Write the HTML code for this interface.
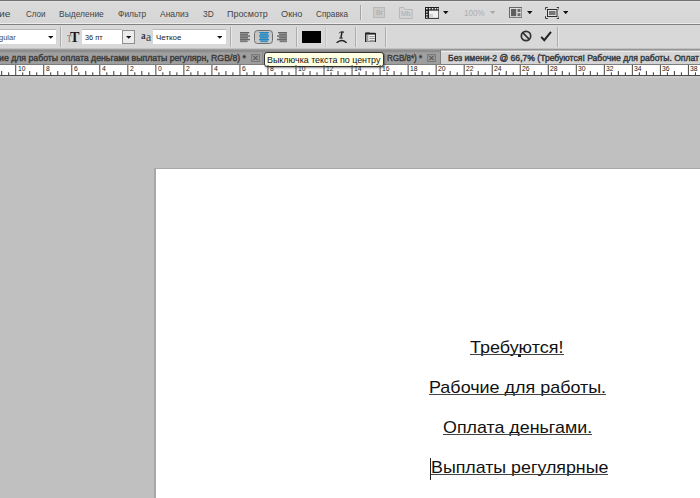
<!DOCTYPE html>
<html lang="ru"><head><meta charset="utf-8"><title>Photoshop</title>
<style>
html,body{margin:0;padding:0}
body{width:700px;height:498px;overflow:hidden;position:relative;background:#c0c0c0;font-family:"Liberation Sans",sans-serif}
.r{position:absolute;display:block}
.t{position:absolute;white-space:pre;transform-origin:0 50%;display:block}
</style></head><body>
<div class="r" style="left:0px;top:0px;width:700px;height:1px;background:#727272;"></div>
<div class="r" style="left:0px;top:1px;width:700px;height:22px;background:linear-gradient(#e2e2e2 0,#dadada 2px,#d6d6d6 100%);"></div>
<div class="r" style="left:0px;top:23px;width:700px;height:1px;background:#ececec;"></div>
<div class="r" style="left:0px;top:24px;width:700px;height:1px;background:#808080;"></div>
<div class="r" style="left:0px;top:25px;width:700px;height:23px;background:#d8d8d8;"></div>
<div class="r" style="left:0px;top:48px;width:700px;height:1px;background:#c2c2c2;"></div>
<div class="r" style="left:0px;top:49px;width:700px;height:16px;background:linear-gradient(#a6a6a6 0,#8c8c8c 1.5px,#8e8e8e 2.6px,#a0a0a0 4px,#9d9d9d 100%);"></div>
<div class="r" style="left:440px;top:49px;width:260px;height:16px;background:linear-gradient(#949494 0,#949494 1px,#b4b4b4 1px,#b4b4b4 2px,#ececec 2px,#ececec 3px,#d6d6d6 3px,#d4d4d4 100%);"></div>
<div class="r" style="left:0px;top:64px;width:700px;height:1px;background:#7c7c7c;"></div>
<div class="r" style="left:262px;top:50px;width:1px;height:15px;background:#8a8a8a;"></div>
<div class="r" style="left:439.5px;top:50px;width:1px;height:14px;background:#808080;"></div>
<div class="r" style="left:0px;top:65px;width:700px;height:11px;background:#ffffff;"></div>
<div class="r" style="left:0px;top:75.3px;width:700px;height:1px;background:#4a4a4a;"></div>
<div class="r" style="left:0px;top:76.3px;width:700px;height:2px;background:#cacaca;"></div>
<span class="t" style="left:25.50px;top:8px;font-size:9.5px;line-height:11px;color:#454545;font-family:'Liberation Sans',sans-serif;transform:scaleX(0.8441);">Слои</span>
<span class="t" style="left:59.00px;top:8px;font-size:9.5px;line-height:11px;color:#454545;font-family:'Liberation Sans',sans-serif;transform:scaleX(0.8900);">Выделение</span>
<span class="t" style="left:118.00px;top:8px;font-size:9.5px;line-height:11px;color:#454545;font-family:'Liberation Sans',sans-serif;transform:scaleX(0.8836);">Фильтр</span>
<span class="t" style="left:160.00px;top:8px;font-size:9.5px;line-height:11px;color:#454545;font-family:'Liberation Sans',sans-serif;transform:scaleX(0.8949);">Анализ</span>
<span class="t" style="left:203.00px;top:8px;font-size:9.5px;line-height:11px;color:#454545;font-family:'Liberation Sans',sans-serif;transform:scaleX(0.8811);">3D</span>
<span class="t" style="left:226.70px;top:8px;font-size:9.5px;line-height:11px;color:#454545;font-family:'Liberation Sans',sans-serif;transform:scaleX(0.9404);">Просмотр</span>
<span class="t" style="left:281.20px;top:8px;font-size:9.5px;line-height:11px;color:#454545;font-family:'Liberation Sans',sans-serif;transform:scaleX(0.9649);">Окно</span>
<span class="t" style="left:315.50px;top:8px;font-size:9.5px;line-height:11px;color:#454545;font-family:'Liberation Sans',sans-serif;transform:scaleX(0.8587);">Справка</span>
<span class="t" style="left:-1.50px;top:8px;font-size:9.5px;line-height:11px;color:#454545;font-family:'Liberation Sans',sans-serif;transform:scaleX(1.0859);">ие</span>
<div class="r" style="left:360px;top:5px;width:1px;height:15px;background:#a4a4a4;"></div>
<div class="r" style="left:361px;top:5px;width:1px;height:15px;background:#e6e6e6;"></div>
<div class="r" style="left:373px;top:7px;width:12px;height:11px;background:#cbcbcb;border:1px solid #b9b9b9;box-sizing:border-box;"></div>
<span class="t" style="left:375.80px;top:8px;font-size:7.2px;line-height:9px;color:#a9a9a9;font-family:'Liberation Sans',sans-serif;transform:scaleX(0.9444);">Br</span>
<svg class="r" style="left:399px;top:6.5px" width="14" height="12" viewBox="0 0 14 12"><path d="M0.5 0.5H4.6L6 2.5H13.2V11.5H0.5Z" fill="#d4d4d4" stroke="#b8b8b8" stroke-width="1"/></svg>
<span class="t" style="left:401.40px;top:9px;font-size:7.6px;line-height:9px;color:#a9a9a9;font-family:'Liberation Sans',sans-serif;transform:scaleX(0.9093);">Mb</span>
<svg class="r" style="left:425px;top:7px" width="14.3" height="11.8" viewBox="0 0 14.3 11.8"><rect x="0" y="0" width="14.3" height="11.8" fill="#1c1c1c"/><rect x="4" y="3.6" width="9.4" height="7.3" fill="#f2f2f2"/><rect x="4" y="7" width="4" height="3.9" fill="#d4d4d4"/><g fill="#e8e8e8"><rect x="1" y="1" width="1.6" height="1.4"/><rect x="3.9" y="1" width="1.6" height="1.4"/><rect x="6.8" y="1" width="1.6" height="1.4"/><rect x="9.7" y="1" width="1.6" height="1.4"/><rect x="12.2" y="1" width="1.3" height="1.4"/><rect x="1" y="4.2" width="1.6" height="1.4"/><rect x="1" y="6.9" width="1.6" height="1.4"/><rect x="1" y="9.5" width="1.6" height="1.3"/></g></svg>
<svg class="r" style="left:443.4px;top:11.1px" width="5.5" height="3.2" viewBox="0 0 5.5 3.2"><polygon points="0,0 5.5,0 2.75,3.2" fill="#111"/></svg>
<span class="t" style="left:463.60px;top:8px;font-size:8.6px;line-height:10px;color:#adadad;font-family:'Liberation Sans',sans-serif;transform:scaleX(0.9411);">100%</span>
<svg class="r" style="left:490.3px;top:11px" width="5.2" height="3" viewBox="0 0 5.2 3"><polygon points="0,0 5.2,0 2.6,3" fill="#a8a8a8"/></svg>
<svg class="r" style="left:509px;top:7px" width="13.4" height="11.2" viewBox="0 0 13.4 11.2"><rect x="0.5" y="0.5" width="12.4" height="10.2" fill="#dedede" stroke="#666"/><rect x="2" y="2" width="5.2" height="7.2" fill="#5e5e5e"/><rect x="8.5" y="2" width="3" height="3" fill="#6a6a6a"/><rect x="8.5" y="6.2" width="3" height="3" fill="#6a6a6a"/></svg>
<svg class="r" style="left:527.2px;top:11.1px" width="5.5" height="3.2" viewBox="0 0 5.5 3.2"><polygon points="0,0 5.5,0 2.75,3.2" fill="#111"/></svg>
<svg class="r" style="left:544.5px;top:6.8px" width="14.5" height="12" viewBox="0 0 14.5 12"><path d="M0.5 2.8V0.5H2.8M11.7 0.5H14V2.8M14 9.2V11.5H11.7M2.8 11.5H0.5V9.2" fill="none" stroke="#3a3a3a" stroke-width="1"/><rect x="2.5" y="2.5" width="9.5" height="7" fill="#e0e0e0" stroke="#2e2e2e"/><rect x="4" y="4" width="6.5" height="4" fill="#777"/></svg>
<svg class="r" style="left:562.8px;top:11.1px" width="5.5" height="3.2" viewBox="0 0 5.5 3.2"><polygon points="0,0 5.5,0 2.75,3.2" fill="#111"/></svg>
<div class="r" style="left:0px;top:29px;width:56px;height:15px;background:#ffffff;border-top:1px solid #b8b8b8;box-sizing:border-box;"></div>
<span class="t" style="left:-1.00px;top:33px;font-size:7.8px;line-height:9px;color:#4a4a4a;font-family:'Liberation Sans',sans-serif;transform:scaleX(0.9628);">gular</span>
<svg class="r" style="left:47.5px;top:36.2px" width="5.6" height="2.8" viewBox="0 0 5.6 2.8"><polygon points="0,0 5.6,0 2.8,2.8" fill="#111"/></svg>
<div class="r" style="left:60px;top:27px;width:1px;height:20px;background:#adadad;"></div>
<div class="r" style="left:61px;top:27px;width:1px;height:20px;background:#e6e6e6;"></div>
<span class="t" style="left:70.30px;top:30px;font-size:13.8px;line-height:15px;color:#1a1a1a;font-family:'Liberation Serif',serif;font-weight:bold;transform:scaleX(1.0212);">T</span>
<span class="t" style="left:66.60px;top:34px;font-size:9.5px;line-height:10px;color:#8a8a8a;font-family:'Liberation Serif',serif;font-weight:bold;transform:scaleX(0.7260);">T</span>
<div class="r" style="left:82px;top:29px;width:40px;height:15px;background:#ffffff;border-top:1px solid #b8b8b8;box-sizing:border-box;"></div>
<span class="t" style="left:85.20px;top:33px;font-size:7.8px;line-height:9px;color:#222;font-family:'Liberation Sans',sans-serif;transform:scaleX(0.9389);">36 пт</span>
<div class="r" style="left:122px;top:30px;width:12.5px;height:14px;background:#ececec;border:1px solid #8f8f8f;box-sizing:border-box;"></div>
<svg class="r" style="left:126px;top:36.2px" width="5.4" height="2.8" viewBox="0 0 5.4 2.8"><polygon points="0,0 5.4,0 2.7,2.8" fill="#111"/></svg>
<span class="t" style="left:141.30px;top:29px;font-size:11px;line-height:12px;color:#333;font-family:'Liberation Serif',serif;font-weight:bold;transform:scaleX(0.8364);">a</span>
<span class="t" style="left:146.30px;top:30px;font-size:12px;line-height:14px;color:#3c3c3c;font-family:'Liberation Serif',serif;transform:scaleX(0.9763);">a</span>
<div class="r" style="left:153px;top:29px;width:73px;height:15px;background:#ffffff;border-top:1px solid #b8b8b8;box-sizing:border-box;"></div>
<span class="t" style="left:156.00px;top:33px;font-size:7.8px;line-height:9px;color:#222;font-family:'Liberation Sans',sans-serif;transform:scaleX(1.0149);">Четкое</span>
<svg class="r" style="left:216.8px;top:36.2px" width="5.6" height="2.8" viewBox="0 0 5.6 2.8"><polygon points="0,0 5.6,0 2.8,2.8" fill="#111"/></svg>
<div class="r" style="left:230px;top:27px;width:1px;height:20px;background:#adadad;"></div>
<div class="r" style="left:231px;top:27px;width:1px;height:20px;background:#e6e6e6;"></div>
<svg class="r" style="left:239.7px;top:31.8px" width="10.2" height="11" viewBox="0 0 10.2 11"><rect x="0" y="0.00" width="9.2" height="1.72" fill="#666" opacity="0.5"/><rect x="0" y="0.00" width="9.2" height="1.05" fill="#666"/><rect x="0" y="1.72" width="8" height="1.72" fill="#666" opacity="0.5"/><rect x="0" y="1.72" width="8" height="1.05" fill="#666"/><rect x="0" y="3.44" width="10.2" height="1.72" fill="#666" opacity="0.5"/><rect x="0" y="3.44" width="10.2" height="1.05" fill="#666"/><rect x="0" y="5.16" width="8" height="1.72" fill="#666" opacity="0.5"/><rect x="0" y="5.16" width="8" height="1.05" fill="#666"/><rect x="0" y="6.88" width="10.2" height="1.72" fill="#666" opacity="0.5"/><rect x="0" y="6.88" width="10.2" height="1.05" fill="#666"/><rect x="0" y="8.60" width="7.5" height="1.72" fill="#666" opacity="0.5"/><rect x="0" y="8.60" width="7.5" height="1.05" fill="#666"/></svg>
<div class="r" style="left:254px;top:29.6px;width:19px;height:14.7px;background:linear-gradient(#c2c2c2,#cdcdcd);border:1.2px solid #6e6e6e;border-radius:3.5px;box-sizing:border-box;"></div>
<svg class="r" style="left:258.8px;top:31.8px" width="10.2" height="11" viewBox="0 0 10.2 11"><rect x="0.5" y="0.00" width="9.2" height="1.72" fill="#1f86c0" opacity="0.5"/><rect x="0.5" y="0.00" width="9.2" height="1.05" fill="#1f86c0"/><rect x="1.0999999999999996" y="1.72" width="8" height="1.72" fill="#1f86c0" opacity="0.5"/><rect x="1.0999999999999996" y="1.72" width="8" height="1.05" fill="#1f86c0"/><rect x="0.0" y="3.44" width="10.2" height="1.72" fill="#1f86c0" opacity="0.5"/><rect x="0.0" y="3.44" width="10.2" height="1.05" fill="#1f86c0"/><rect x="1.0999999999999996" y="5.16" width="8" height="1.72" fill="#1f86c0" opacity="0.5"/><rect x="1.0999999999999996" y="5.16" width="8" height="1.05" fill="#1f86c0"/><rect x="0.0" y="6.88" width="10.2" height="1.72" fill="#1f86c0" opacity="0.5"/><rect x="0.0" y="6.88" width="10.2" height="1.05" fill="#1f86c0"/><rect x="1.3499999999999996" y="8.60" width="7.5" height="1.72" fill="#1f86c0" opacity="0.5"/><rect x="1.3499999999999996" y="8.60" width="7.5" height="1.05" fill="#1f86c0"/></svg>
<svg class="r" style="left:276.6px;top:31.8px" width="10.2" height="11" viewBox="0 0 10.2 11"><rect x="1.0" y="0.00" width="9.2" height="1.72" fill="#666" opacity="0.5"/><rect x="1.0" y="0.00" width="9.2" height="1.05" fill="#666"/><rect x="2.1999999999999993" y="1.72" width="8" height="1.72" fill="#666" opacity="0.5"/><rect x="2.1999999999999993" y="1.72" width="8" height="1.05" fill="#666"/><rect x="0.0" y="3.44" width="10.2" height="1.72" fill="#666" opacity="0.5"/><rect x="0.0" y="3.44" width="10.2" height="1.05" fill="#666"/><rect x="2.1999999999999993" y="5.16" width="8" height="1.72" fill="#666" opacity="0.5"/><rect x="2.1999999999999993" y="5.16" width="8" height="1.05" fill="#666"/><rect x="0.0" y="6.88" width="10.2" height="1.72" fill="#666" opacity="0.5"/><rect x="0.0" y="6.88" width="10.2" height="1.05" fill="#666"/><rect x="2.6999999999999993" y="8.60" width="7.5" height="1.72" fill="#666" opacity="0.5"/><rect x="2.6999999999999993" y="8.60" width="7.5" height="1.05" fill="#666"/></svg>
<div class="r" style="left:296px;top:27px;width:1px;height:20px;background:#adadad;"></div>
<div class="r" style="left:297px;top:27px;width:1px;height:20px;background:#e6e6e6;"></div>
<div class="r" style="left:302px;top:31.2px;width:18.8px;height:12px;background:#000000;"></div>
<div class="r" style="left:325px;top:27px;width:1px;height:20px;background:#c4c4c4;"></div>
<div class="r" style="left:326px;top:27px;width:1px;height:20px;background:#e2e2e2;"></div>
<svg class="r" style="left:335.5px;top:31.3px" width="11.5" height="12.2" viewBox="0 0 11.5 12.2"><path d="M6 0.9L4.9 6.9" stroke="#222" stroke-width="1.5" fill="none"/><path d="M3.1 2.3L4.2 1.1L7.4 0.7L7.6 1.8" stroke="#222" stroke-width="0.9" fill="none"/><path d="M3.2 7.1H6.8" stroke="#222" stroke-width="1"/><path d="M0.6 11.9Q5.6 7.3 10.8 11.9" fill="none" stroke="#222" stroke-width="1.4"/></svg>
<div class="r" style="left:355px;top:27px;width:1px;height:20px;background:#adadad;"></div>
<div class="r" style="left:356px;top:27px;width:1px;height:20px;background:#e6e6e6;"></div>
<svg class="r" style="left:365px;top:31.6px" width="11.4" height="10.8" viewBox="0 0 11.4 10.8"><rect x="0.7" y="1.5" width="10" height="8.6" rx="0.8" fill="#f4f4f4" stroke="#222" stroke-width="1.4"/><path d="M0.2 2.6V0.6H4.6L5.6 1.6H10.9V2.6Z" fill="#222"/><rect x="1.5" y="2.8" width="1.9" height="6.6" fill="#9a9a9a"/><path d="M4.4 4.6H9.9M4.4 6.5H9.9M4.4 8.4H9.9" stroke="#7a7a7a" stroke-width="0.8"/></svg>
<div class="r" style="left:385px;top:27px;width:1px;height:20px;background:#adadad;"></div>
<div class="r" style="left:386px;top:27px;width:1px;height:20px;background:#e6e6e6;"></div>
<svg class="r" style="left:520.2px;top:30.4px" width="12" height="12" viewBox="0 0 12 12"><circle cx="6" cy="6" r="4.7" fill="none" stroke="#333" stroke-width="1.7"/><path d="M2.7 2.7L9.3 9.3" stroke="#333" stroke-width="1.7"/></svg>
<svg class="r" style="left:540.4px;top:31px" width="12.4" height="11" viewBox="0 0 12.4 11"><path d="M1.2 5.8L4.3 9.2L11 0.9" fill="none" stroke="#222" stroke-width="2"/></svg>
<div class="r" style="left:557px;top:27px;width:1px;height:20px;background:#adadad;"></div>
<div class="r" style="left:558px;top:27px;width:1px;height:20px;background:#e6e6e6;"></div>
<span class="t" style="left:-1.00px;top:53px;font-size:8.5px;line-height:10px;color:#3a3a3a;font-family:'Liberation Sans',sans-serif;transform:scaleX(1.0270);-webkit-text-stroke:0.4px #3a3a3a;">ие для работы оплата деньгами выплаты регулярн, RGB/8) *</span>
<svg class="r" style="left:251px;top:54px" width="9" height="8" viewBox="0 0 9 8"><rect x="0.5" y="0.5" width="8" height="7" fill="#959595" stroke="#7a7a7a"/><path d="M2.5 2L6.5 6M6.5 2L2.5 6" stroke="#444" stroke-width="1"/></svg>
<span class="t" style="left:387.00px;top:53px;font-size:8.5px;line-height:10px;color:#3a3a3a;font-family:'Liberation Sans',sans-serif;transform:scaleX(0.9379);-webkit-text-stroke:0.4px #3a3a3a;">RGB/8*) *</span>
<svg class="r" style="left:427px;top:54px" width="9" height="8" viewBox="0 0 9 8"><rect x="0.5" y="0.5" width="8" height="7" fill="#959595" stroke="#7a7a7a"/><path d="M2.5 2L6.5 6M6.5 2L2.5 6" stroke="#444" stroke-width="1"/></svg>
<span class="t" style="left:448.00px;top:53px;font-size:9px;line-height:10px;color:#363c42;font-family:'Liberation Sans',sans-serif;transform:scaleX(0.9529);-webkit-text-stroke:0.45px #363c42;">Без имени-2 @ 66,7% (Требуются! Рабочие для работы. Оплат</span>
<div class="r" style="left:263.8px;top:52px;width:120.6px;height:14.6px;background:#ffffe1;border:1px solid #333;border-radius:3px;box-sizing:border-box;box-shadow:1px 1px 2px rgba(0,0,0,0.45);"></div>
<span class="t" style="left:267.40px;top:54px;font-size:9.8px;line-height:11px;color:#111;font-family:'Liberation Sans',sans-serif;transform:scaleX(0.9082);">Выключка текста по центру</span>
<svg class="r" style="left:0;top:65px" width="700" height="11" viewBox="0 0 700 11"><rect x="-12.83" y="0" width="1" height="11" fill="#484848"/><rect x="-5.82" y="7.3" width="1" height="2.7" fill="#3a3a3a"/><rect x="1.18" y="6" width="1" height="4" fill="#3a3a3a"/><rect x="8.19" y="7.3" width="1" height="2.7" fill="#3a3a3a"/><rect x="15.20" y="0" width="1" height="11" fill="#484848"/><rect x="22.21" y="7.3" width="1" height="2.7" fill="#3a3a3a"/><rect x="29.21" y="6" width="1" height="4" fill="#3a3a3a"/><rect x="36.22" y="7.3" width="1" height="2.7" fill="#3a3a3a"/><rect x="43.23" y="0" width="1" height="11" fill="#484848"/><rect x="50.24" y="7.3" width="1" height="2.7" fill="#3a3a3a"/><rect x="57.24" y="6" width="1" height="4" fill="#3a3a3a"/><rect x="64.25" y="7.3" width="1" height="2.7" fill="#3a3a3a"/><rect x="71.26" y="0" width="1" height="11" fill="#484848"/><rect x="78.27" y="7.3" width="1" height="2.7" fill="#3a3a3a"/><rect x="85.27" y="6" width="1" height="4" fill="#3a3a3a"/><rect x="92.28" y="7.3" width="1" height="2.7" fill="#3a3a3a"/><rect x="99.29" y="0" width="1" height="11" fill="#484848"/><rect x="106.30" y="7.3" width="1" height="2.7" fill="#3a3a3a"/><rect x="113.30" y="6" width="1" height="4" fill="#3a3a3a"/><rect x="120.31" y="7.3" width="1" height="2.7" fill="#3a3a3a"/><rect x="127.32" y="0" width="1" height="11" fill="#484848"/><rect x="134.33" y="7.3" width="1" height="2.7" fill="#3a3a3a"/><rect x="141.33" y="6" width="1" height="4" fill="#3a3a3a"/><rect x="148.34" y="7.3" width="1" height="2.7" fill="#3a3a3a"/><rect x="155.35" y="0" width="1" height="11" fill="#484848"/><rect x="162.36" y="7.3" width="1" height="2.7" fill="#3a3a3a"/><rect x="169.37" y="6" width="1" height="4" fill="#3a3a3a"/><rect x="176.37" y="7.3" width="1" height="2.7" fill="#3a3a3a"/><rect x="183.38" y="0" width="1" height="11" fill="#484848"/><rect x="190.39" y="7.3" width="1" height="2.7" fill="#3a3a3a"/><rect x="197.39" y="6" width="1" height="4" fill="#3a3a3a"/><rect x="204.40" y="7.3" width="1" height="2.7" fill="#3a3a3a"/><rect x="211.41" y="0" width="1" height="11" fill="#484848"/><rect x="218.42" y="7.3" width="1" height="2.7" fill="#3a3a3a"/><rect x="225.43" y="6" width="1" height="4" fill="#3a3a3a"/><rect x="232.43" y="7.3" width="1" height="2.7" fill="#3a3a3a"/><rect x="239.44" y="0" width="1" height="11" fill="#484848"/><rect x="246.45" y="7.3" width="1" height="2.7" fill="#3a3a3a"/><rect x="253.45" y="6" width="1" height="4" fill="#3a3a3a"/><rect x="260.46" y="7.3" width="1" height="2.7" fill="#3a3a3a"/><rect x="267.47" y="0" width="1" height="11" fill="#484848"/><rect x="274.48" y="7.3" width="1" height="2.7" fill="#3a3a3a"/><rect x="281.49" y="6" width="1" height="4" fill="#3a3a3a"/><rect x="288.49" y="7.3" width="1" height="2.7" fill="#3a3a3a"/><rect x="295.50" y="0" width="1" height="11" fill="#484848"/><rect x="302.51" y="7.3" width="1" height="2.7" fill="#3a3a3a"/><rect x="309.51" y="6" width="1" height="4" fill="#3a3a3a"/><rect x="316.52" y="7.3" width="1" height="2.7" fill="#3a3a3a"/><rect x="323.53" y="0" width="1" height="11" fill="#484848"/><rect x="330.54" y="7.3" width="1" height="2.7" fill="#3a3a3a"/><rect x="337.54" y="6" width="1" height="4" fill="#3a3a3a"/><rect x="344.55" y="7.3" width="1" height="2.7" fill="#3a3a3a"/><rect x="351.56" y="0" width="1" height="11" fill="#484848"/><rect x="358.57" y="7.3" width="1" height="2.7" fill="#3a3a3a"/><rect x="365.57" y="6" width="1" height="4" fill="#3a3a3a"/><rect x="372.58" y="7.3" width="1" height="2.7" fill="#3a3a3a"/><rect x="379.59" y="0" width="1" height="11" fill="#484848"/><rect x="386.60" y="7.3" width="1" height="2.7" fill="#3a3a3a"/><rect x="393.61" y="6" width="1" height="4" fill="#3a3a3a"/><rect x="400.61" y="7.3" width="1" height="2.7" fill="#3a3a3a"/><rect x="407.62" y="0" width="1" height="11" fill="#484848"/><rect x="414.63" y="7.3" width="1" height="2.7" fill="#3a3a3a"/><rect x="421.63" y="6" width="1" height="4" fill="#3a3a3a"/><rect x="428.64" y="7.3" width="1" height="2.7" fill="#3a3a3a"/><rect x="435.65" y="0" width="1" height="11" fill="#484848"/><rect x="442.66" y="7.3" width="1" height="2.7" fill="#3a3a3a"/><rect x="449.66" y="6" width="1" height="4" fill="#3a3a3a"/><rect x="456.67" y="7.3" width="1" height="2.7" fill="#3a3a3a"/><rect x="463.68" y="0" width="1" height="11" fill="#484848"/><rect x="470.69" y="7.3" width="1" height="2.7" fill="#3a3a3a"/><rect x="477.70" y="6" width="1" height="4" fill="#3a3a3a"/><rect x="484.70" y="7.3" width="1" height="2.7" fill="#3a3a3a"/><rect x="491.71" y="0" width="1" height="11" fill="#484848"/><rect x="498.72" y="7.3" width="1" height="2.7" fill="#3a3a3a"/><rect x="505.73" y="6" width="1" height="4" fill="#3a3a3a"/><rect x="512.73" y="7.3" width="1" height="2.7" fill="#3a3a3a"/><rect x="519.74" y="0" width="1" height="11" fill="#484848"/><rect x="526.75" y="7.3" width="1" height="2.7" fill="#3a3a3a"/><rect x="533.75" y="6" width="1" height="4" fill="#3a3a3a"/><rect x="540.76" y="7.3" width="1" height="2.7" fill="#3a3a3a"/><rect x="547.77" y="0" width="1" height="11" fill="#484848"/><rect x="554.78" y="7.3" width="1" height="2.7" fill="#3a3a3a"/><rect x="561.78" y="6" width="1" height="4" fill="#3a3a3a"/><rect x="568.79" y="7.3" width="1" height="2.7" fill="#3a3a3a"/><rect x="575.80" y="0" width="1" height="11" fill="#484848"/><rect x="582.81" y="7.3" width="1" height="2.7" fill="#3a3a3a"/><rect x="589.82" y="6" width="1" height="4" fill="#3a3a3a"/><rect x="596.82" y="7.3" width="1" height="2.7" fill="#3a3a3a"/><rect x="603.83" y="0" width="1" height="11" fill="#484848"/><rect x="610.84" y="7.3" width="1" height="2.7" fill="#3a3a3a"/><rect x="617.85" y="6" width="1" height="4" fill="#3a3a3a"/><rect x="624.85" y="7.3" width="1" height="2.7" fill="#3a3a3a"/><rect x="631.86" y="0" width="1" height="11" fill="#484848"/><rect x="638.87" y="7.3" width="1" height="2.7" fill="#3a3a3a"/><rect x="645.88" y="6" width="1" height="4" fill="#3a3a3a"/><rect x="652.88" y="7.3" width="1" height="2.7" fill="#3a3a3a"/><rect x="659.89" y="0" width="1" height="11" fill="#484848"/><rect x="666.90" y="7.3" width="1" height="2.7" fill="#3a3a3a"/><rect x="673.90" y="6" width="1" height="4" fill="#3a3a3a"/><rect x="680.91" y="7.3" width="1" height="2.7" fill="#3a3a3a"/><rect x="687.92" y="0" width="1" height="11" fill="#484848"/><rect x="694.93" y="7.3" width="1" height="2.7" fill="#3a3a3a"/><rect x="701.94" y="6" width="1" height="4" fill="#3a3a3a"/><rect x="708.94" y="7.3" width="1" height="2.7" fill="#3a3a3a"/></svg>
<span class="t" style="left:-10.43px;top:64px;font-size:8px;line-height:9px;color:#1a1a1a;font-family:'Liberation Sans',sans-serif;transform:scaleX(0.8500);">12</span>
<span class="t" style="left:17.60px;top:64px;font-size:8px;line-height:9px;color:#1a1a1a;font-family:'Liberation Sans',sans-serif;transform:scaleX(0.8500);">10</span>
<span class="t" style="left:45.63px;top:64px;font-size:8px;line-height:9px;color:#1a1a1a;font-family:'Liberation Sans',sans-serif;transform:scaleX(0.8500);">8</span>
<span class="t" style="left:73.66px;top:64px;font-size:8px;line-height:9px;color:#1a1a1a;font-family:'Liberation Sans',sans-serif;transform:scaleX(0.8500);">6</span>
<span class="t" style="left:101.69px;top:64px;font-size:8px;line-height:9px;color:#1a1a1a;font-family:'Liberation Sans',sans-serif;transform:scaleX(0.8500);">4</span>
<span class="t" style="left:129.72px;top:64px;font-size:8px;line-height:9px;color:#1a1a1a;font-family:'Liberation Sans',sans-serif;transform:scaleX(0.8500);">2</span>
<span class="t" style="left:157.75px;top:64px;font-size:8px;line-height:9px;color:#1a1a1a;font-family:'Liberation Sans',sans-serif;transform:scaleX(0.8500);">0</span>
<span class="t" style="left:185.78px;top:64px;font-size:8px;line-height:9px;color:#1a1a1a;font-family:'Liberation Sans',sans-serif;transform:scaleX(0.8500);">2</span>
<span class="t" style="left:213.81px;top:64px;font-size:8px;line-height:9px;color:#1a1a1a;font-family:'Liberation Sans',sans-serif;transform:scaleX(0.8500);">4</span>
<span class="t" style="left:241.84px;top:64px;font-size:8px;line-height:9px;color:#1a1a1a;font-family:'Liberation Sans',sans-serif;transform:scaleX(0.8500);">6</span>
<span class="t" style="left:269.87px;top:64px;font-size:8px;line-height:9px;color:#1a1a1a;font-family:'Liberation Sans',sans-serif;transform:scaleX(0.8500);">8</span>
<span class="t" style="left:297.90px;top:64px;font-size:8px;line-height:9px;color:#1a1a1a;font-family:'Liberation Sans',sans-serif;transform:scaleX(0.8500);">10</span>
<span class="t" style="left:325.93px;top:64px;font-size:8px;line-height:9px;color:#1a1a1a;font-family:'Liberation Sans',sans-serif;transform:scaleX(0.8500);">12</span>
<span class="t" style="left:353.96px;top:64px;font-size:8px;line-height:9px;color:#1a1a1a;font-family:'Liberation Sans',sans-serif;transform:scaleX(0.8500);">14</span>
<span class="t" style="left:381.99px;top:64px;font-size:8px;line-height:9px;color:#1a1a1a;font-family:'Liberation Sans',sans-serif;transform:scaleX(0.8500);">16</span>
<span class="t" style="left:410.02px;top:64px;font-size:8px;line-height:9px;color:#1a1a1a;font-family:'Liberation Sans',sans-serif;transform:scaleX(0.8500);">18</span>
<span class="t" style="left:438.05px;top:64px;font-size:8px;line-height:9px;color:#1a1a1a;font-family:'Liberation Sans',sans-serif;transform:scaleX(0.8500);">20</span>
<span class="t" style="left:466.08px;top:64px;font-size:8px;line-height:9px;color:#1a1a1a;font-family:'Liberation Sans',sans-serif;transform:scaleX(0.8500);">22</span>
<span class="t" style="left:494.11px;top:64px;font-size:8px;line-height:9px;color:#1a1a1a;font-family:'Liberation Sans',sans-serif;transform:scaleX(0.8500);">24</span>
<span class="t" style="left:522.14px;top:64px;font-size:8px;line-height:9px;color:#1a1a1a;font-family:'Liberation Sans',sans-serif;transform:scaleX(0.8500);">26</span>
<span class="t" style="left:550.17px;top:64px;font-size:8px;line-height:9px;color:#1a1a1a;font-family:'Liberation Sans',sans-serif;transform:scaleX(0.8500);">28</span>
<span class="t" style="left:578.20px;top:64px;font-size:8px;line-height:9px;color:#1a1a1a;font-family:'Liberation Sans',sans-serif;transform:scaleX(0.8500);">30</span>
<span class="t" style="left:606.23px;top:64px;font-size:8px;line-height:9px;color:#1a1a1a;font-family:'Liberation Sans',sans-serif;transform:scaleX(0.8500);">32</span>
<span class="t" style="left:634.26px;top:64px;font-size:8px;line-height:9px;color:#1a1a1a;font-family:'Liberation Sans',sans-serif;transform:scaleX(0.8500);">34</span>
<span class="t" style="left:662.29px;top:64px;font-size:8px;line-height:9px;color:#1a1a1a;font-family:'Liberation Sans',sans-serif;transform:scaleX(0.8500);">36</span>
<span class="t" style="left:690.32px;top:64px;font-size:8px;line-height:9px;color:#1a1a1a;font-family:'Liberation Sans',sans-serif;transform:scaleX(0.8500);">38</span>
<div class="r" style="left:154px;top:167.7px;width:546px;height:331px;background:#a8a8a8;box-shadow:-0.5px -0.5px 1px rgba(0,0,0,0.12);"></div>
<div class="r" style="left:155.6px;top:169px;width:545px;height:329px;background:#ffffff;"></div>
<span class="t" style="left:470.40px;top:338px;font-size:17px;line-height:19px;color:#111;font-family:'Liberation Sans',sans-serif;transform:scaleX(1.0564);">Требуются!</span>
<div class="r" style="left:470.4px;top:354px;width:93.39999999999998px;height:1px;background:#444;"></div>
<span class="t" style="left:428.60px;top:378px;font-size:17px;line-height:19px;color:#111;font-family:'Liberation Sans',sans-serif;transform:scaleX(1.0554);">Рабочие для работы.</span>
<div class="r" style="left:428.6px;top:394px;width:177.10000000000002px;height:1px;background:#444;"></div>
<span class="t" style="left:442.90px;top:418px;font-size:17px;line-height:19px;color:#111;font-family:'Liberation Sans',sans-serif;transform:scaleX(1.0499);">Оплата деньгами.</span>
<div class="r" style="left:442.9px;top:433.7px;width:149.10000000000002px;height:1px;background:#444;"></div>
<span class="t" style="left:431.00px;top:458px;font-size:17px;line-height:19px;color:#111;font-family:'Liberation Sans',sans-serif;transform:scaleX(1.0474);">Выплаты регулярные</span>
<div class="r" style="left:431.0px;top:473.5px;width:177.39999999999998px;height:1px;background:#444;"></div>
<div class="r" style="left:429.9px;top:458px;width:1px;height:21.5px;background:#222;"></div>
<div class="r" style="left:518px;top:354px;width:2.5px;height:2.5px;background:#222;"></div>
</body></html>
